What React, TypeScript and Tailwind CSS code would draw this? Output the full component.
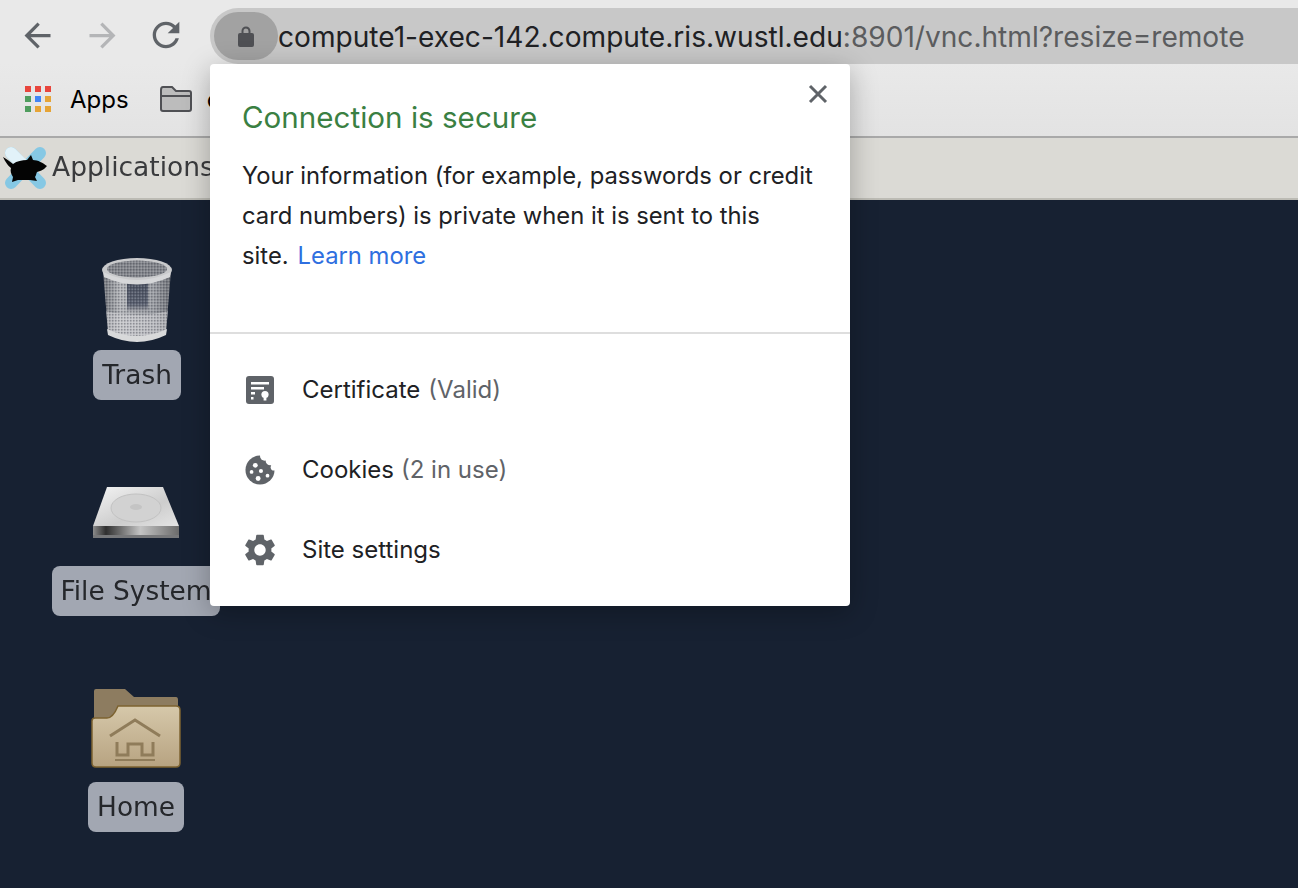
import type { ReactNode } from "react";

const uiFont = "font-['Inter','Liberation_Sans',sans-serif]";

function NavIcon({ d, className }: { d: string; className: string }) {
  return (
    <svg viewBox="0 0 24 24" className={className} fill="currentColor">
      <path d={d} />
    </svg>
  );
}

function AppsGrid() {
  const colors = ["bg-[#e8453c]", "bg-[#e8453c]", "bg-[#e8453c]", "bg-[#4f9d5e]", "bg-[#4285f4]", "bg-[#e6a436]", "bg-[#4f9d5e]", "bg-[#e6a436]", "bg-[#e6a436]"];
  return (
    <div className="grid grid-cols-3 gap-1 w-[26px] shrink-0 mb-[2px]">
      {colors.map((c, i) => (
        <div key={i} className={`w-[6px] h-[6px] ${c}`} />
      ))}
    </div>
  );
}

function XfceLogo() {
  return (
    <svg viewBox="0 0 46 46" className="w-[46px] h-[46px] shrink-0 blur-[0.4px]">
      <g strokeWidth="12" strokeLinecap="round" fill="none">
        <path d="M38 8 L9 38" stroke="#86c8e4" />
        <path d="M9 8 L38 38" stroke="#86c8e4" />
        <path d="M9 8 L20 19" stroke="#e2f2f9" />
      </g>
      <path d="M1 12 C5 14 8 17 11 19 C15 16 20 15 25 15 L29 10 L31 15 C36 15 41 18 45 21 L42 24 C39 26 37 26 35 27 C34 29 34 31 33 32 L35 36 L28 35 L16 35 L10 37 L11 32 C9 29 8 26 9 23 C6 21 3 16 1 12 Z" fill="#040404" />
    </svg>
  );
}

function TrashIcon() {
  return (
    <svg viewBox="0 0 74 86" className="w-[74px] h-[86px] blur-[0.5px]">
      <defs>
        <linearGradient id="can" x1="0" x2="1" y1="0" y2="0">
          <stop offset="0" stopColor="#73767c" />
          <stop offset="0.25" stopColor="#b4b6ba" />
          <stop offset="0.75" stopColor="#9a9da3" />
          <stop offset="1" stopColor="#6d7076" />
        </linearGradient>
        <linearGradient id="dark" x1="0" x2="0" y1="0" y2="1">
          <stop offset="0" stopColor="#3a4254" />
          <stop offset="0.75" stopColor="#4b5264" />
          <stop offset="1" stopColor="#9a9ca2" />
        </linearGradient>
        <pattern id="mesh" width="3" height="3" patternUnits="userSpaceOnUse">
          <rect width="1.5" height="1.5" fill="#2a2f3a" opacity="0.35" />
          <rect x="1.5" y="1.5" width="1.5" height="1.5" fill="#ffffff" opacity="0.2" />
        </pattern>
      </defs>
      <path d="M3 14 L8 74 Q37 90 66 74 L71 14 Z" fill="url(#can)" />
      <rect x="27" y="26" width="21" height="28" fill="url(#dark)" opacity="0.85" />
      <path d="M6 54 Q37 62 68 54 L66 74 Q37 88 8 74 Z" fill="#d5d6d8" opacity="0.55" />
      <path d="M3 14 L8 74 Q37 90 66 74 L71 14 Z" fill="url(#mesh)" />
      <path d="M7 72 Q37 86 67 72 L66 78 Q37 92 8 78 Z" fill="#d8d9da" />
      <ellipse cx="37" cy="13" rx="35" ry="12" fill="#c9cacc" />
      <ellipse cx="37" cy="12" rx="30" ry="8.5" fill="#83868c" />
      <ellipse cx="37" cy="12" rx="30" ry="8.5" fill="url(#mesh)" />
      <path d="M3 15 Q37 31 71 15 L70 20 Q37 35 4 20 Z" fill="#d6d7d9" />
    </svg>
  );
}

function DiskIcon() {
  return (
    <svg viewBox="0 0 88 54" className="w-[88px] h-[54px] blur-[0.5px]">
      <defs>
        <linearGradient id="disk" x1="0" x2="1" y1="0" y2="1">
          <stop offset="0" stopColor="#f4f4f4" />
          <stop offset="0.6" stopColor="#cdcdcd" />
          <stop offset="1" stopColor="#e4e4e4" />
        </linearGradient>
        <linearGradient id="edge" x1="0" x2="1" y1="0" y2="0">
          <stop offset="0" stopColor="#8c8c8c" />
          <stop offset="0.15" stopColor="#2f2f2f" />
          <stop offset="0.55" stopColor="#c4c4c4" />
          <stop offset="1" stopColor="#6b6b6b" />
        </linearGradient>
      </defs>
      <path d="M15 1 L71 1 L87 40 L1 40 Z" fill="url(#disk)" />
      <ellipse cx="44" cy="22" rx="25" ry="14" fill="#d2d2d2" stroke="#c2c2c2" />
      <ellipse cx="44" cy="21" rx="6" ry="3" fill="#c4c4c4" />
      <rect x="1" y="40" width="86" height="9" fill="url(#edge)" />
      <rect x="1" y="49" width="86" height="3" fill="#77787a" />
    </svg>
  );
}

function HomeFolderIcon() {
  return (
    <svg viewBox="0 0 90 80" className="w-[90px] h-[80px] blur-[0.5px]">
      <defs>
        <linearGradient id="folder" x1="0" x2="0" y1="0" y2="1">
          <stop offset="0" stopColor="#d6c8aa" />
          <stop offset="1" stopColor="#b7a381" />
        </linearGradient>
      </defs>
      <path d="M3 3 Q3 1 5 1 L34 1 L43 9 L85 9 Q87 9 87 12 L87 30 L3 30 Z" fill="#8d7c60" />
      <path d="M1 33 Q1 30 4 30 L16 30 Q22 30 27 18 L85 18 Q89 18 89 22 L89 75 Q89 79 85 79 L5 79 Q1 79 1 75 Z" fill="url(#folder)" stroke="#7d6331" strokeWidth="1.5" />
      <g fill="none" stroke="#8f7c5a" strokeWidth="3">
        <path d="M19 48 L44 32 L69 48" />
        <path d="M26 54 L26 67 L37 67 L37 56 L51 56 L51 67 L62 67 L62 54" />
        <path d="M24 72 L64 72" strokeWidth="2" />
      </g>
    </svg>
  );
}

function DesktopItem({ icon, label, className }: { icon: ReactNode; label: string; className: string }) {
  return (
    <div className={`flex flex-col items-center ${className}`}>
      {icon}
      <div className="h-[50px] px-[9px] flex items-center bg-[#a2a7b2] rounded-lg text-[#25272b] text-[26.4px] font-['DejaVu_Sans',sans-serif] blur-[0.5px] whitespace-nowrap">
        {label}
      </div>
    </div>
  );
}

function CertIcon() {
  return (
    <svg viewBox="0 0 30 30" className="w-[30px] h-[30px]">
      <rect x="1" y="1" width="28" height="28" rx="3" fill="#5f6368" />
      <rect x="6" y="7" width="18" height="2.5" fill="#fff" />
      <rect x="6" y="12" width="13" height="2.5" fill="#fff" />
      <rect x="6" y="17" width="4" height="2.5" fill="#fff" />
      <rect x="6" y="22" width="2.5" height="2.5" fill="#fff" />
      <circle cx="20" cy="19.5" r="3.6" fill="#fff" />
      <rect x="18.6" y="21" width="2.8" height="4.5" fill="#fff" />
    </svg>
  );
}

function CookieIcon() {
  return (
    <svg viewBox="0 0 32 32" className="w-[30px] h-[30px]">
      <circle cx="16" cy="16" r="15.5" fill="#5f6368" />
      <circle cx="27" cy="6" r="5" fill="#fff" />
      <circle cx="21" cy="1" r="5" fill="#fff" />
      <circle cx="31" cy="13" r="3.6" fill="#fff" />
      <circle cx="11" cy="11" r="2.6" fill="#fff" />
      <circle cx="7" cy="18" r="2" fill="#fff" />
      <circle cx="17" cy="17" r="2.2" fill="#fff" />
      <circle cx="14" cy="25" r="2.6" fill="#fff" />
      <circle cx="24" cy="22" r="2" fill="#fff" />
    </svg>
  );
}

function GearIcon() {
  return (
    <svg viewBox="0 0 24 24" className="w-[38px] h-[38px] -mx-1" fill="#5f6368">
      <path d="M19.14 12.94c.04-.3.06-.61.06-.94 0-.32-.02-.64-.07-.94l2.03-1.58c.18-.14.23-.41.12-.61l-1.92-3.32c-.12-.22-.37-.29-.59-.22l-2.39.96c-.5-.38-1.03-.7-1.62-.94l-.36-2.54c-.04-.24-.24-.41-.48-.41h-3.84c-.24 0-.43.17-.47.41l-.36 2.54c-.59.24-1.13.57-1.62.94l-2.39-.96c-.22-.08-.47 0-.59.22L2.74 8.87c-.12.21-.08.47.12.61l2.03 1.58c-.05.3-.09.63-.09.94s.02.64.07.94l-2.03 1.58c-.18.14-.23.41-.12.61l1.92 3.32c.12.22.37.29.59.22l2.39-.96c.5.38 1.03.7 1.62.94l.36 2.54c.05.24.24.41.48.41h3.84c.24 0 .44-.17.47-.41l.36-2.54c.59-.24 1.13-.56 1.62-.94l2.39.96c.22.08.47 0 .59-.22l1.92-3.32c.12-.22.07-.47-.12-.61l-2.01-1.58zM12 15.6c-1.98 0-3.6-1.62-3.6-3.6s1.62-3.6 3.6-3.6 3.6 1.62 3.6 3.6-1.62 3.6-3.6 3.6z" />
    </svg>
  );
}

function InfoRow({ icon, label, note, noteClass }: { icon: ReactNode; label: string; note?: string; noteClass?: string }) {
  return (
    <div className="h-20 flex items-center">
      <div className="w-[60px] pl-[3px] flex justify-start items-center">{icon}</div>
      <span className="text-[#202124]">{label}</span>
      {note && <span className={`text-[#5f6368] ${noteClass}`}>{note}</span>}
    </div>
  );
}

export default function App() {
  return (
    <div className={`relative w-[1298px] h-[888px] overflow-hidden flex flex-col bg-[#172132] ${uiFont}`}>
      {/* Browser toolbar */}
      <div className="h-16 shrink-0 bg-[#e9e9e9] flex items-end">
        <div className="w-[210px] h-16 shrink-0 flex items-center pl-[18px] pt-[6px]">
          <NavIcon className="w-[39px] h-[39px] text-[#5f6368]" d="M20 11H7.83l5.59-5.59L12 4l-8 8 8 8 1.41-1.41L7.83 13H20v-2z" />
          <NavIcon className="ml-[26px] w-[39px] h-[39px] text-[#b4b5b7]" d="M4 11h12.17l-5.59-5.59L12 4l8 8-8 8-1.41-1.41L16.17 13H4v-2z" />
          <NavIcon className="ml-[24px] w-[40px] h-[40px] text-[#5f6368]" d="M17.65 6.35C16.2 4.9 14.21 4 12 4c-4.42 0-7.99 3.58-7.99 8s3.57 8 7.99 8c3.73 0 6.84-2.55 7.73-6h-2.08c-.82 2.33-3.04 4-5.65 4-3.31 0-6-2.69-6-6s2.69-6 6-6c1.66 0 3.14.69 4.22 1.78L13 11h7V4l-2.35 2.35z" />
        </div>
        <div className="flex-1 h-14 bg-[#c8c8c8] rounded-l-[28px] flex items-center pl-1">
          <div className="w-16 h-12 rounded-3xl bg-[#a2a2a2] flex items-center justify-center shrink-0">
            <svg viewBox="0 0 18 22" className="w-[18px] h-[22px]" fill="#4f5054">
              <path d="M4.5 9V6a4.5 4.5 0 0 1 9 0v3h-2V6a2.5 2.5 0 0 0-5 0v3z" />
              <rect x="1" y="8" width="16" height="14" rx="2" />
            </svg>
          </div>
          <div className="text-[28.1px] mt-[2px] whitespace-nowrap text-[#5b5c5e]">
            <span className="text-[#202124]">compute1-exec-142.compute.ris.wustl.edu</span>:8901/vnc.html?resize=remote
          </div>
        </div>
      </div>

      {/* Bookmarks bar */}
      <div className="h-[74px] shrink-0 bg-gradient-to-b from-[#e9e9e9] to-[#e3e3e3] border-b-2 border-[#a9a9a9] flex items-center pl-[25px] text-black text-[24px]">
        <AppsGrid />
        <span className="ml-[19px]">Apps</span>
        <svg viewBox="0 0 32 26" className="ml-[31px] mb-[2px] w-[32px] h-[26px]">
          <path d="M1 4 Q1 1 3 1 L12 1 L16 5 L29 5 Q31 5 31 7 L31 23 Q31 25 29 25 L3 25 Q1 25 1 23 Z" fill="#bcbcbc" stroke="#4f5054" strokeWidth="2" />
          <path d="M1 10 L31 10" stroke="#4f5054" strokeWidth="2" />
        </svg>
        <span className="ml-[15px]">c</span>
      </div>

      {/* XFCE panel */}
      <div className="h-[62px] shrink-0 bg-[#dbdad5] border-b-2 border-[#bcbbb4] flex items-center pl-[2px]">
        <XfceLogo />
        <span className="ml-[4px] mb-[2px] text-[26.5px] text-[#3a3b3d] font-['DejaVu_Sans',sans-serif] blur-[0.5px] whitespace-nowrap">Applications</span>
      </div>

      {/* Desktop */}
      <div className="flex-1 w-[272px] flex flex-col items-center pt-[57px]">
        <DesktopItem icon={<TrashIcon />} label="Trash" className="gap-[7px] ml-[2px]" />
        <DesktopItem icon={<DiskIcon />} label="File System" className="gap-[26px] mt-[86px]" />
        <DesktopItem icon={<HomeFolderIcon />} label="Home" className="gap-[14px] mt-[72px]" />
      </div>

      {/* Site info popup */}
      <div className="absolute left-[210px] top-16 w-[640px] h-[542px] bg-white rounded-[4px] shadow-[0_6px_28px_rgba(0,0,0,0.28)]">
        <div className="relative h-[270px] border-b-2 border-[#dedede] pt-[33px] px-[32px]">
          <svg viewBox="0 0 20 20" className="absolute right-[22px] top-[20px] w-5 h-5" stroke="#5f6368" strokeWidth="3" fill="none">
            <path d="M2 2 L18 18 M18 2 L2 18" />
          </svg>
          <div className="text-[29.6px] leading-[40px] text-[#3a8042]">Connection is secure</div>
          <p className="mt-[19px] text-[23.8px] leading-10 text-[#202124] whitespace-nowrap">
            Your information (for example, passwords or credit
            <br />
            card numbers) is private when it is sent to this
            <br />
            site.<span className="ml-[9px] text-[#2f6fe0]">Learn more</span>
          </p>
        </div>
        <div className="pt-4 pl-[32px] text-[24px]">
          <InfoRow icon={<CertIcon />} label="Certificate" note="(Valid)" noteClass="ml-[8px]" />
          <InfoRow icon={<CookieIcon />} label="Cookies" note="(2 in use)" noteClass="ml-[7px]" />
          <InfoRow icon={<GearIcon />} label="Site settings" />
        </div>
      </div>
    </div>
  );
}
